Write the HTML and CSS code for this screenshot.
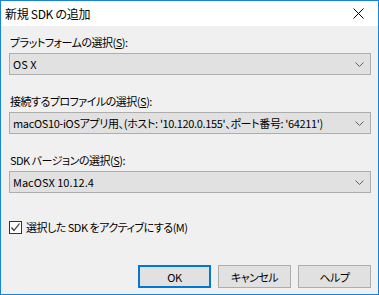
FILE: index.html
```html
<!DOCTYPE html>
<html>
<head>
	<title>新規 SDK の追加</title>
<link rel="stylesheet" href="styles.css">
</head>
<body>

<div class="window">
	<div class="titlebar">
		<span class="title">新規 SDK の追加</span>
		<div class="close">
			<svg width="11" height="11" viewBox="0 0 11 11"><path d="M0.5 0.5 L10.5 10.5 M10.5 0.5 L0.5 10.5" stroke="#000" stroke-width="1" fill="none"/></svg>
		</div>
	</div>

	<div class="content">
		<div class="label">プラットフォームの選択(<u>S</u>):</div>
		<div class="combo"><span class="value">OS X</span><span class="arrow"><svg width="9" height="5" viewBox="0 0 9 5"><path d="M0.5 0.5 L4.5 4.5 L8.5 0.5" stroke="#606060" fill="none"/></svg></span></div>

		<div class="label gap">接続するプロファイルの選択(<u>S</u>):</div>
		<div class="combo"><span class="value long">macOS10-iOSアプリ用、(ホスト: '10.120.0.155'、ポート番号: '64211')</span><span class="arrow"><svg width="9" height="5" viewBox="0 0 9 5"><path d="M0.5 0.5 L4.5 4.5 L8.5 0.5" stroke="#606060" fill="none"/></svg></span></div>

		<div class="label gap">SDK バージョンの選択(<u>S</u>):</div>
		<div class="combo"><span class="value">MacOSX 10.12.4</span><span class="arrow"><svg width="9" height="5" viewBox="0 0 9 5"><path d="M0.5 0.5 L4.5 4.5 L8.5 0.5" stroke="#606060" fill="none"/></svg></span></div>

		<div class="check">
			<span class="box"><svg width="11" height="11" viewBox="0 0 11 11"><path d="M1.5 5.5 L4 8.5 L9.5 1.5" stroke="#333" stroke-width="1.2" fill="none"/></svg></span>
			<span>選択した SDK をアクティブにする(M)</span>
		</div>

		<div class="buttons">
			<div class="btn default">OK</div>
			<div class="btn">キャンセル</div>
			<div class="btn">ヘルプ</div>
		</div>
	</div>
</div>

</body>
</html>
```

FILE: styles.css
```css
	body {
		margin:0;
		font-family:"Noto Sans CJK JP", "Noto Sans", sans-serif;
		font-size:11px;
		letter-spacing:-0.5px;
		font-feature-settings:"palt";
		color:#000;}

	.window {
		width:377px;
		height:293px;
		border:1px solid #1883d7;
		background-color:#f0f0f0;
		display:flex;
		flex-direction:column;}

	.titlebar {
		height:25px;
		background-color:#fff;
		display:flex;
		align-items:center;
		justify-content:space-between;
		padding-left:4px;}

	.title {
		font-size:12px;
		letter-spacing:-0.3px;
		line-height:14px;}

	.close {
		width:46px;
		height:25px;
		display:flex;
		align-items:center;
		justify-content:center;
		margin-right:-3px;}

	.content {
		flex:1;
		display:flex;
		flex-direction:column;
		padding:9px 7px 6px 8px;}

	.label {
		line-height:14px;
		height:14px;
		margin-bottom:4px;
		padding-left:1px;}

	.label u {
		text-underline-offset:1px;}

	.gap {
		margin-top:19px;}

	.combo {
		height:20px;
		border:1px solid #adadad;
		background-color:#e1e1e1;
		display:flex;
		align-items:center;
		justify-content:space-between;
		padding:0 6px 0 3px;}

	.value {
		white-space:nowrap;
		overflow:hidden;
		letter-spacing:0;}

	.long {
		letter-spacing:-0.35px;}

	.arrow {
		display:flex;
		align-items:center;
		margin-left:6px;}

	.check {
		display:flex;
		align-items:center;
		margin-top:27px;
		height:14px;}

	.box {
		width:11px;
		height:11px;
		border:1px solid #333;
		background-color:#fff;
		display:flex;
		margin-right:4px;}

	.buttons {
		margin-top:auto;
		display:flex;
		justify-content:flex-end;
		gap:7px;}

	.btn {
		width:71px;
		height:21px;
		border:1px solid #adadad;
		background-color:#e1e1e1;
		display:flex;
		align-items:center;
		justify-content:center;}

	.default {
		width:69px;
		height:19px;
		border:2px solid #0078d7;}
```
